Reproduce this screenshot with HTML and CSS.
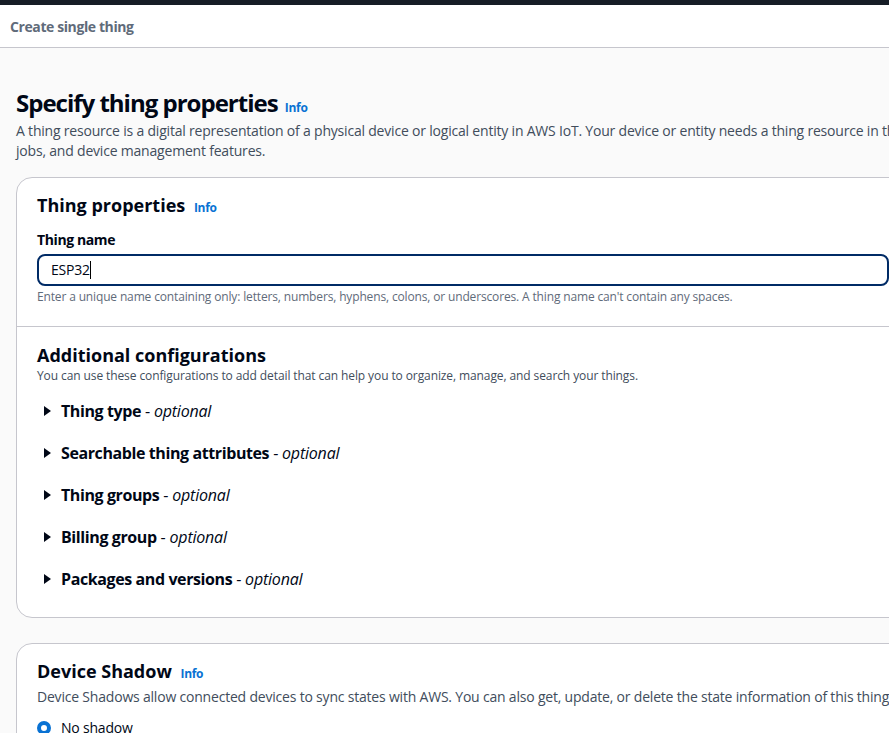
FILE: index.html
```html
<!DOCTYPE html>
<html lang="en">
<head>
<meta charset="UTF-8">
<title>Create single thing</title>
<link rel="stylesheet" href="styles.css">
</head>
<body>
  <div class="topbar"></div>
  <div class="header">Create single thing</div>

  <div class="page">
    <h1 class="page-title">Specify thing properties <a class="info" href="#">Info</a></h1>
    <p class="intro">A thing resource is a digital representation of a physical device or logical entity in AWS IoT. Your device or entity needs a thing resource in the registry to use AWS IoT features such as Device Shadows, events, jobs, and device management features.</p>

    <div class="card">
      <div class="section">
        <h2>Thing properties <a class="info" href="#">Info</a></h2>
        <label class="field-label">Thing name</label>
        <div class="text-input">ESP32<span class="caret"></span></div>
        <p class="hint">Enter a unique name containing only: letters, numbers, hyphens, colons, or underscores. A thing name can't contain any spaces.</p>
      </div>
      <div class="section section-last">
        <h2>Additional configurations</h2>
        <p class="small-desc">You can use these configurations to add detail that can help you to organize, manage, and search your things.</p>
        <ul class="expanders">
          <li><span class="arrow"></span><b>Thing type</b> - <i>optional</i></li>
          <li><span class="arrow"></span><b>Searchable thing attributes</b> - <i>optional</i></li>
          <li><span class="arrow"></span><b>Thing groups</b> - <i>optional</i></li>
          <li><span class="arrow"></span><b>Billing group</b> - <i>optional</i></li>
          <li><span class="arrow"></span><b>Packages and versions</b> - <i>optional</i></li>
        </ul>
      </div>
    </div>

    <div class="card">
      <div class="section">
        <h2>Device Shadow <a class="info" href="#">Info</a></h2>
        <p class="desc">Device Shadows allow connected devices to sync states with AWS. You can also get, update, or delete the state information of this thing's shadow using HTTPs or MQTT topics.</p>
        <div class="radio-row"><span class="radio"></span>No shadow</div>
      </div>
    </div>
  </div>
</body>
</html>
```
FILE: styles.css
```css
body {
  margin: 0;
  padding: 0;
  font-family: "Open Sans", Arial, sans-serif;
  letter-spacing: -0.2px;
  background-color: #fafafa;
  color: #000716;
  overflow: hidden;
}

b {
  letter-spacing: -0.4px;
}

.topbar {
  height: 5px;
  background-color: #161d26;
}

.header {
  height: 41px;
  line-height: 41px;
  padding: 1px 10px 0;
  font-size: 14px;
  font-weight: bold;
  letter-spacing: -0.4px;
  color: #5f6b7a;
  background-color: white;
  border-bottom: 1px solid #c6c6cd;
}

.page {
  width: 1240px;
  padding: 0 16px;
}

.page-title {
  margin: 40px 0 0;
  font-size: 24px;
  line-height: 30px;
  font-weight: bold;
  letter-spacing: -1px;
}

.info {
  margin-left: 2px;
  font-size: 12px;
  line-height: 1;
  font-weight: bold;
  letter-spacing: -0.3px;
  color: #0972d3;
  text-decoration: none;
}

.intro {
  margin: 3px 0 16px;
  width: 1318px;
  font-size: 14px;
  line-height: 20px;
  color: #414d5c;
}

.card {
  background-color: white;
  border: 1px solid #c6c6cd;
  border-radius: 16px;
  margin-bottom: 25px;
}

.section {
  padding: 16px 20px 21px;
  border-bottom: 1px solid #c6c6cd;
}

.section:last-child {
  border-bottom: none;
}

.section-last {
  padding-top: 17px;
  padding-bottom: 27px;
}

.section h2 {
  margin: 0;
  font-size: 18px;
  line-height: 22px;
  font-weight: bold;
  letter-spacing: 0;
}

.section h2 .info {
  margin-left: 4px;
}

.field-label {
  display: block;
  margin: 13px 0 3px;
  font-size: 14px;
  line-height: 22px;
  font-weight: bold;
  letter-spacing: -0.4px;
}

.text-input {
  width: 852px;
  box-sizing: border-box;
  height: 32px;
  line-height: 28px;
  padding: 0 12px;
  border: 2px solid #002b66;
  border-radius: 8px;
  font-size: 14px;
}

.caret {
  display: inline-block;
  width: 1px;
  height: 18px;
  background-color: #000;
  vertical-align: -4px;
}

.hint {
  margin: 3px 0 0;
  font-size: 12px;
  line-height: 16px;
  letter-spacing: -0.15px;
  color: #5f6b7a;
}

.small-desc {
  margin: 2px 0 0;
  font-size: 12px;
  line-height: 16px;
  letter-spacing: -0.1px;
  color: #414d5c;
}

.expanders {
  list-style: none;
  margin: 16px 0 0;
  padding: 0;
}

.expanders li {
  display: flex;
  align-items: center;
  height: 22px;
  margin-bottom: 20px;
  font-size: 16px;
  line-height: 22px;
  white-space: pre;
}

.expanders li:last-child {
  margin-bottom: 0;
}

.arrow {
  width: 0;
  height: 0;
  margin: 0 10px 0 7px;
  border-top: 5px solid transparent;
  border-bottom: 5px solid transparent;
  border-left: 7px solid #000716;
}

.desc {
  margin: 5px 0 0;
  font-size: 14px;
  line-height: 20px;
  color: #414d5c;
}

.radio-row {
  display: flex;
  align-items: center;
  margin-top: 11px;
  font-size: 14px;
  line-height: 20px;
}

.radio {
  width: 6px;
  height: 6px;
  border: 4px solid #0972d3;
  border-radius: 50%;
  margin-right: 10px;
}
```
